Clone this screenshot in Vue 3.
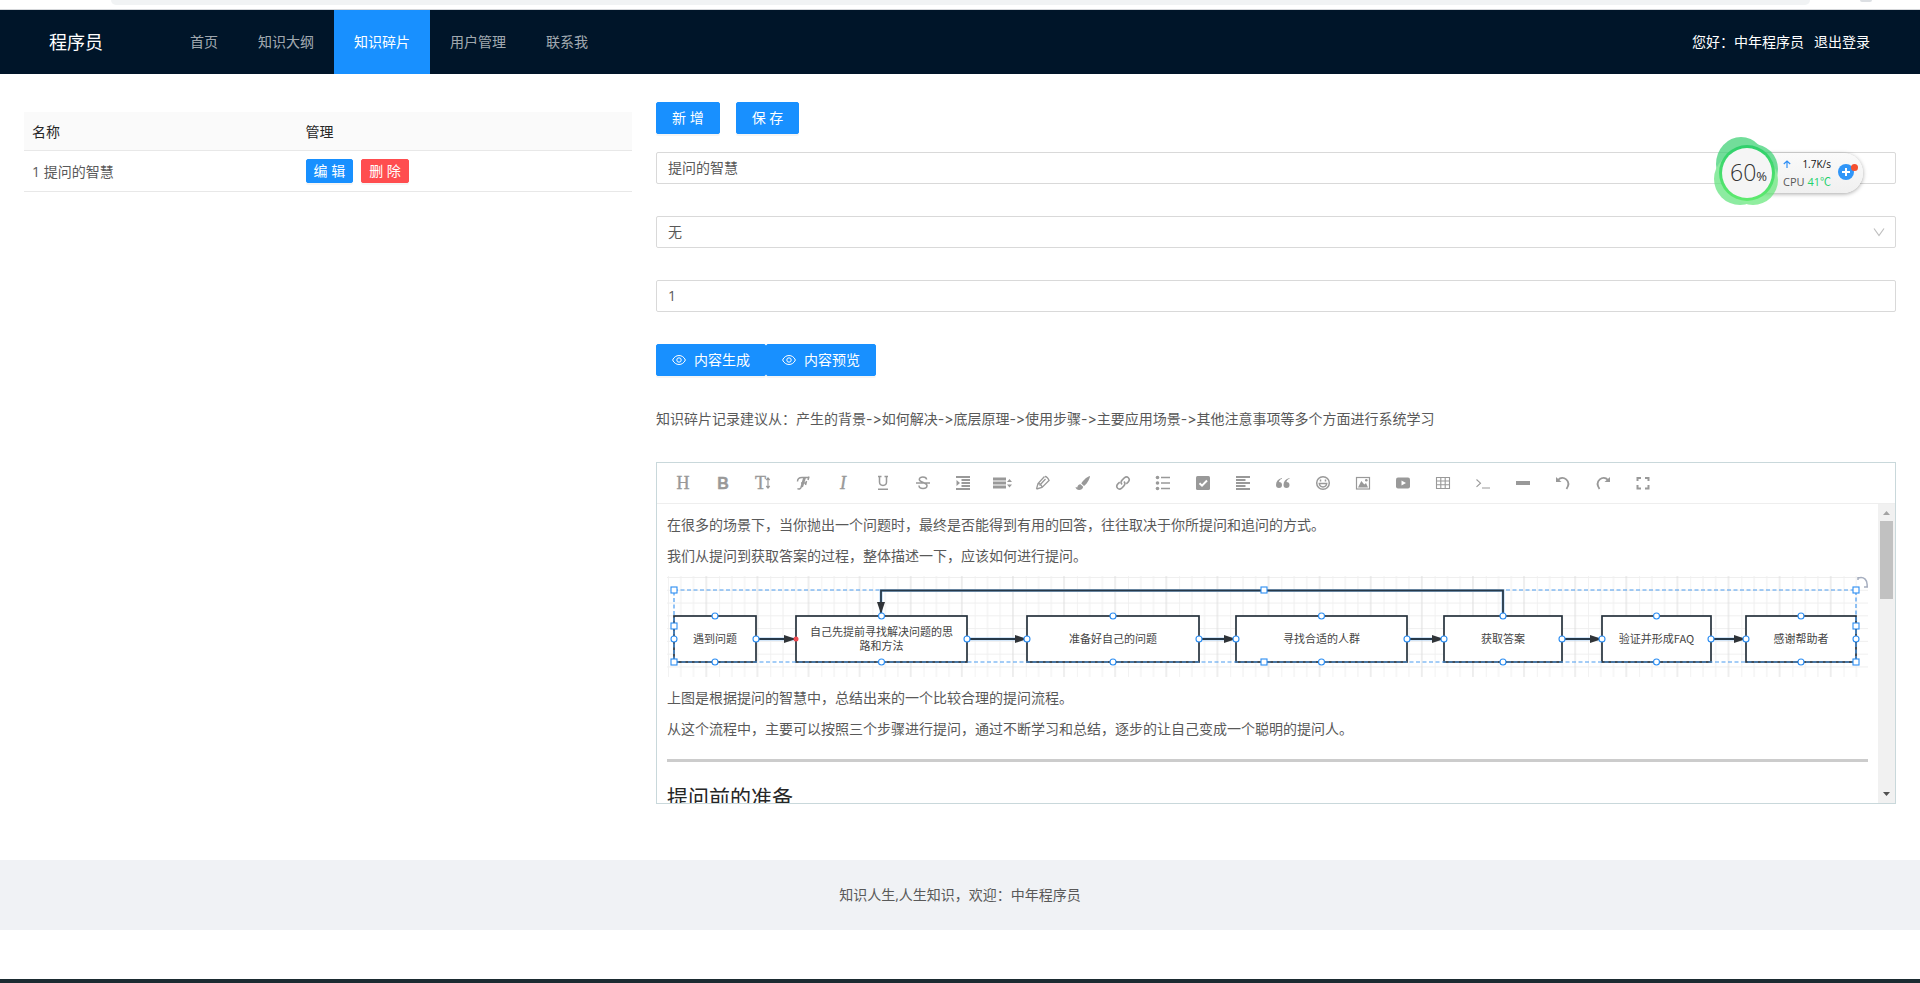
<script setup>
import { ref } from 'vue'

const menus = ['首页', '知识大纲', '知识碎片', '用户管理', '联系我']
const active = '知识碎片'
const title = ref('提问的智慧')
const parent = ref('无')
const sort = ref('1')

const tools = [
  '标题', '加粗', '字号', '字体', '斜体', '下划线', '删除线', '缩进', '行高', '文字颜色',
  '背景色', '链接', '列表', '待办', '对齐', '引用', '表情', '图片', '视频', '表格',
  '代码', '分割线', '撤销', '恢复', '全屏',
]

const nodes = [
  { x: 7, w: 82, lines: ['遇到问题'] },
  { x: 129, w: 171, lines: ['自己先提前寻找解决问题的思', '路和方法'] },
  { x: 360, w: 172, lines: ['准备好自己的问题'] },
  { x: 569, w: 171, lines: ['寻找合适的人群'] },
  { x: 777, w: 118, lines: ['获取答案'] },
  { x: 935, w: 109, lines: ['验证并形成FAQ'] },
  { x: 1079, w: 110, lines: ['感谢帮助者'] },
]
const links = nodes.slice(1).map((n, i) => ({ from: nodes[i].x + nodes[i].w, to: n.x }))
const squares = [[7, 14], [7, 50], [7, 86], [597, 14], [597, 86], [1189, 14], [1189, 50], [1189, 86]]
</script>

<template>
  <div class="page">
    <div class="browser-edge">
      <span class="address"></span>
      <span class="avatar"></span>
    </div>

    <header class="header">
      <div class="logo">程序员</div>
      <nav class="nav">
        <a v-for="m in menus" :key="m" href="#" :class="['nav-item', { active: m === active }]">{{ m }}</a>
      </nav>
      <div class="user">
        <a href="#">您好：中年程序员</a>
        <a href="#">退出登录</a>
      </div>
    </header>

    <main class="main">
      <section class="left">
        <table class="table">
          <thead>
            <tr><th class="name">名称</th><th>管理</th></tr>
          </thead>
          <tbody>
            <tr>
              <td>1 提问的智慧</td>
              <td>
                <div class="row-actions">
                  <button class="btn small" type="button">编 辑</button>
                  <button class="btn small danger" type="button">删 除</button>
                </div>
              </td>
            </tr>
          </tbody>
        </table>
      </section>

      <section class="right">
        <div class="actions">
          <button class="btn" type="button">新 增</button>
          <button class="btn" type="button">保 存</button>
        </div>
        <div class="form">
          <input v-model="title" class="field" type="text" aria-label="名称" />
          <div class="select-wrap">
            <select v-model="parent" class="field" aria-label="上级">
              <option>无</option>
            </select>
            <svg class="chevron" viewBox="0 0 12 12" width="12" height="12"><path d="M1 2.500 6 9.500 11 2.500" fill="none" stroke="#bfbfbf" stroke-width="1.200" /></svg>
          </div>
          <input v-model="sort" class="field" type="text" aria-label="排序" />
          <div class="preview-actions">
            <button v-for="t in ['内容生成', '内容预览']" :key="t" class="btn icon-btn" type="button">
              <svg viewBox="0 0 14 14" width="14" height="14" fill="none" stroke="#fff" stroke-width="1">
                <path d="M.6 7C2 4 4.300 2.500 7 2.500S12 4 13.400 7C12 10 9.700 11.500 7 11.500S2 10 .6 7Z" />
                <circle cx="7" cy="7" r="2.200" />
              </svg>
              <span>{{ t }}</span>
            </button>
          </div>
          <p class="hint">知识碎片记录建议从：产生的背景-&gt;如何解决-&gt;底层原理-&gt;使用步骤-&gt;主要应用场景-&gt;其他注意事项等多个方面进行系统学习</p>
        </div>

        <div class="editor">
          <div class="toolbar">
            <button v-for="(t, i) in tools" :key="t" class="tool" type="button" :aria-label="t">
              <svg viewBox="0 0 20 24" width="20" height="24" fill="none" stroke="#999" stroke-width="1.500">
                <text v-if="i === 0" x="10" y="18" class="serif" text-anchor="middle">H</text>
                <text v-else-if="i === 1" x="10" y="18" class="sans" text-anchor="middle">B</text>
                <template v-else-if="i === 2">
                  <text x="2" y="18" class="serif">T</text>
                  <path d="M15 7v10M13.300 9 15 7l1.700 2M13.300 15l1.700 2 1.700-2" stroke-width="1.200" />
                </template>
                <text v-else-if="i === 4" x="10" y="18" class="serif italic" text-anchor="middle">I</text>
                <g v-else transform="translate(0 4)">
                  <template v-if="i === 3">
                    <path d="M4.500 6.500C4.500 3.500 6.500 2.500 9 2.500h6.500M16 1.500l-1 3.500M11 2.500 8 12.500C7.500 14 5.500 14.500 4.500 13.500M8 8h5M13.500 6l-1 4" />
                    <path d="M12 2.500 9 12" stroke-width="2" />
                  </template>
                  <path v-else-if="i === 5" d="M5 1.500h3.500M11.500 1.500H15M6.500 1.500V7c0 4.500 7 4.500 7 0V1.500M5 14.200h10" />
                  <path v-else-if="i === 6" d="M13.600 4.500C13.300 1 6.300 1 6.300 4.500c0 3 7.700 3 7.700 6 0 4-8 4-8 0M3 8h14" />
                  <g v-else-if="i === 7">
                    <path d="M3 2h14M8.500 5H17M8.500 8H17M8.500 11H17M3 14h14" stroke-width="1.800" />
                    <path d="M3.500 5 7 8l-3.500 3Z" fill="#999" stroke="none" />
                  </g>
                  <path v-else-if="i === 8" fill="#999" stroke="none" d="M0 2.500h13v3H0zM0 6.500h13v3H0zM0 10.500h13v3H0zM14 7l2.500-3L19 7zM14 9.500l2.500 3 2.500-3z" />
                  <path v-else-if="i === 9" d="M3.500 14 5 8.500 11.500 1.500M3.500 14 9 12.500 16.500 5M6.500 10.500l6-6.500M12 1.500c1.500 0 3.500 2 4 4M5 8.500c2 0 4 2 4 4" stroke-width="1.300" />
                  <path v-else-if="i === 10" fill="#999" stroke="none" d="M16.500 1C13 2.500 9.500 6 8.300 8.500L11 11c2.500-1.500 5.500-6.500 6-9.500ZM7.500 9.300c-2 0-3 1.500-3.200 3.200L2.500 12c.5 4 7 4 7.700-.3Z" />
                  <path v-else-if="i === 11" d="M9 9.500c-1.800-1.800-1-3.300.3-4.600l2-2c3-2.600 6.600 1 4 4l-2 2M11 6.500c1.800 1.800 1 3.300-.3 4.600l-2 2c-3 2.600-6.600-1-4-4l2-2" />
                  <g v-else-if="i === 12">
                    <path d="M8 2.500h9M8 8h9M8 13.500h9" />
                    <g fill="#999" stroke="none"><circle cx="4.500" cy="2.500" r="1.800" /><circle cx="4.500" cy="8" r="1.800" /><circle cx="4.500" cy="13.500" r="1.800" /></g>
                  </g>
                  <g v-else-if="i === 13"><rect x="3" y="1" width="14" height="14" rx="1.500" fill="#999" stroke="none" /><path d="m6.500 8.300 2.500 2.400 5-5.200" stroke="#fff" stroke-width="2" /></g>
                  <path v-else-if="i === 14" d="M3 2h14M3 5h9.500M3 8h14M3 11h9.500M3 14h14" stroke-width="1.800" />
                  <path v-else-if="i === 15" fill="#999" stroke="none" d="M9 3C5 4 3 6.500 3 10a3 3 0 1 0 3-3c.2-1.500 1.200-2.700 3-3.300ZM16.500 3c-4 1-6 3.500-6 7a3 3 0 1 0 3-3c.2-1.500 1.200-2.700 3-3.300Z" />
                  <g v-else-if="i === 16"><circle cx="10" cy="8" r="6.300" /><path d="M6.300 8.500h7.400c-.5 4.600-6.900 4.600-7.400 0ZM7.500 4.500v2M12.500 4.500v2" /></g>
                  <g v-else-if="i === 17"><rect x="3.500" y="2.500" width="13" height="11.500" stroke-width="1.200" /><path d="M5 12.500 8.300 6l3 3.500L13 8l2 4.500Z" fill="#999" stroke="none" /><circle cx="13.300" cy="5.300" r="1.300" fill="#999" stroke="none" /></g>
                  <g v-else-if="i === 18"><rect x="3" y="2.500" width="14" height="11" rx="2" fill="#999" stroke="none" /><path d="m8.500 5.500 4.500 2.500-4.500 2.500Z" fill="#fff" stroke="none" /></g>
                  <path v-else-if="i === 19" d="M3.500 2.500h13v11h-13ZM3.500 6h13M3.500 9.800h13M7.800 2.500v11M12.200 2.500v11" stroke-width="1.100" />
                  <path v-else-if="i === 20" d="m3.500 4.500 4 3.700-4 3.700M9 13h8" stroke-width="1.100" />
                  <path v-else-if="i === 21" d="M3 8h14" stroke-width="4" />
                  <g v-else-if="i === 22"><path d="M5 5C10-.5 19 6 13.500 14" stroke-width="1.800" /><path d="M3 2v5h5.500Z" fill="#999" stroke="none" /></g>
                  <g v-else-if="i === 23"><path d="M15 5C10-.5 1 6 6.500 14" stroke-width="1.800" /><path d="M17 2v5h-5.500Z" fill="#999" stroke="none" /></g>
                  <path v-else d="M4.500 6V3h3.500M12 3h3.500v3M15.500 10v3.500H12M8 13.500H4.500V10" stroke-width="2" />
                </g>
              </svg>
            </button>
          </div>

          <div class="body">
            <article class="content">
              <p>在很多的场景下，当你抛出一个问题时，最终是否能得到有用的回答，往往取决于你所提问和追问的方式。</p>
              <p>我们从提问到获取答案的过程，整体描述一下，应该如何进行提问。</p>
              <svg class="flow" viewBox="0 0 1201 101">
                <defs>
                  <pattern id="grid" x="1" y="1" width="51.110" height="51.110" patternUnits="userSpaceOnUse">
                    <path d="M12.800 0v51.110M25.500 0v51.110M0 .5h51.110M0 13.300h51.110M0 26h51.110M0 38.800h51.110M.3 0v51.110" stroke="#efefef" stroke-width="1" />
                    <path d="M38.300 0v51.110" stroke="#dedede" stroke-width="1" />
                  </pattern>
                  <marker id="arrow" markerWidth="12" markerHeight="8" refX="12" refY="4" orient="auto" markerUnits="userSpaceOnUse">
                    <path d="M0 0 12 4 0 8Z" fill="#303438" />
                  </marker>
                </defs>
                <rect width="1201" height="101" fill="url(#grid)" />
                <rect x="1190" width="11" height="13" fill="#fff" />
                <path d="M1191 2c6-2 10 2 9 9M1191 4V1M1197 11h4" fill="none" stroke="#a6aebf" stroke-width="1.500" />
                <rect v-for="n in nodes" :key="n.x" :x="n.x" y="40" :width="n.w" height="46" fill="#fff" stroke="#26323c" stroke-width="1.700" />
                <rect x="7" y="14" width="1182" height="72" fill="none" stroke="#4a9cf0" stroke-width="1.200" stroke-dasharray="4 2.500" />
                <g v-for="l in links" :key="l.to">
                  <path :d="`M${l.from} 63H${l.to}`" stroke="#a9d0f5" stroke-width="3" />
                  <path :d="`M${l.from} 63H${l.to}`" stroke="#26394a" stroke-width="1.800" marker-end="url(#arrow)" />
                </g>
                <g fill="none">
                  <path d="M836 40V14.500H214V38" stroke="#a9d0f5" stroke-width="3" />
                  <path d="M836 40V14.500H214V38" stroke="#26394a" stroke-width="1.800" marker-end="url(#arrow)" />
                </g>
                <g fill="#fff" stroke="#2b8df2" stroke-width="1.100">
                  <template v-for="n in nodes" :key="n.x">
                    <circle :cx="n.x + n.w / 2" cy="40" r="3" />
                    <circle :cx="n.x + n.w / 2" cy="86" r="3" />
                    <circle v-if="n.x !== 129" :cx="n.x" cy="63" r="3" />
                    <circle :cx="n.x + n.w" cy="63" r="3" />
                  </template>
                  <rect v-for="s in squares" :key="s.join()" :x="s[0] - 3" :y="s[1] - 3" width="6" height="6" />
                </g>
                <circle cx="129" cy="63" r="2.500" fill="#f04a50" />
                <template v-for="n in nodes" :key="n.x">
                  <text
                    v-for="(line, k) in n.lines" :key="line" class="node-text" text-anchor="middle"
                    :x="n.x + n.w / 2" :y="67 + (k * 2 - n.lines.length + 1) * 7"
                  >{{ line }}</text>
                </template>
              </svg>
              <p>上图是根据提问的智慧中，总结出来的一个比较合理的提问流程。</p>
              <p>从这个流程中，主要可以按照三个步骤进行提问，通过不断学习和总结，逐步的让自己变成一个聪明的提问人。</p>
              <hr />
              <h2>提问前的准备</h2>
            </article>
            <div class="scrollbar">
              <svg viewBox="0 0 17 17" width="17" height="17"><path d="M5 11h7L8.500 7Z" fill="#a3a3a3" /></svg>
              <div class="thumb"></div>
              <svg class="down" viewBox="0 0 17 17" width="17" height="17"><path d="M5 6h7l-3.500 4Z" fill="#505050" /></svg>
            </div>
          </div>
        </div>
      </section>
    </main>

    <footer class="footer">知识人生,人生知识，欢迎：中年程序员</footer>
    <div class="taskbar"></div>

    <aside class="monitor">
      <div class="stats">
        <svg viewBox="0 0 8 8" width="8" height="8" fill="none" stroke="#2f8ff5" stroke-width="1.200"><path d="M4 8V1M.8 4 4 1l3.200 3" /></svg>
        <span class="speed">1.7K/s</span>
        <span class="cpu">CPU <b>41℃</b></span>
      </div>
      <svg class="plus" viewBox="0 0 22 20" width="22" height="20">
        <circle cx="9" cy="11" r="8" fill="#3096f8" />
        <path d="M9 7v8M5 11h8" stroke="#fff" stroke-width="2" />
        <circle cx="17.500" cy="6.500" r="3.500" fill="#f4502f" />
      </svg>
      <svg class="ring" viewBox="0 0 68 70" width="68" height="70">
        <defs>
          <linearGradient id="ring-fill" x1="0" y1="0" x2="0" y2="1"><stop offset="0" stop-color="#2fd06c" /><stop offset="1" stop-color="#5eea6e" /></linearGradient>
        </defs>
        <g opacity=".7">
          <ellipse cx="28" cy="28" rx="25" ry="27" fill="#37d070" />
          <circle cx="40" cy="33" r="25" fill="#37d070" />
          <circle cx="27" cy="43" r="26" fill="#5ee37a" />
          <circle cx="40" cy="44" r="25" fill="#62e777" />
        </g>
        <circle cx="34" cy="37" r="28" fill="url(#ring-fill)" />
        <circle cx="34" cy="37" r="25" fill="#f5f5f5" />
        <text x="17" y="45" class="percent">60<tspan class="sign">%</tspan></text>
      </svg>
    </aside>
  </div>
</template>

<style>
body {
  background: #fff;
}
</style>

<style scoped>
* {
  box-sizing: border-box;
}
.page {
  position: relative;
  display: flex;
  flex-direction: column;
  min-height: 100vh;
  font: 14px/21px "Open Sans", "Noto Sans CJK SC", sans-serif;
  color: #595959;
}
a {
  text-decoration: none;
}
p {
  margin: 0;
}
.browser-edge {
  display: flex;
  justify-content: space-between;
  height: 10px;
  padding: 0 48px 0 111px;
  border-bottom: 1px solid #d5d7da;
  overflow: hidden;
}
.address {
  flex: 1;
  height: 5px;
  margin-right: 50px;
  background: #f1f3f4;
  border-radius: 0 0 12px 12px;
}
.avatar {
  width: 12px;
  height: 2px;
  background: #dcdfe3;
  border-radius: 0 0 6px 6px;
}
.header {
  display: flex;
  align-items: center;
  height: 64px;
  padding: 0 50px 0 49px;
  background: #001529;
  color: #fff;
  line-height: 64px;
}
.logo {
  width: 121px;
  font-size: 18px;
}
.nav {
  display: flex;
  flex: 1;
}
.nav-item {
  padding: 0 20px;
  color: rgba(255, 255, 255, 0.65);
}
.nav-item.active {
  background: #1890ff;
  color: #fff;
}
.user {
  display: flex;
  gap: 10px;
}
.user a {
  color: #fff;
}
.main {
  display: grid;
  grid-template-columns: minmax(0, 1fr) minmax(0, 2fr);
  padding: 28px 0 56px;
}
.left {
  padding: 10px 8px 0 24px;
}
.right {
  padding: 0 24px 0 16px;
}
.table {
  width: 100%;
  border-collapse: separate;
  border-spacing: 0;
  table-layout: fixed;
}
.table th,
.table td {
  height: 39px;
  padding: 0 8px;
  border-bottom: 1px solid #e8e8e8;
  text-align: left;
  font-weight: 400;
}
.table td {
  height: 41px;
}
.table th {
  background: #fafafa;
  color: #262626;
}
.table .name {
  width: 45%;
}
.row-actions {
  display: flex;
  gap: 8px;
}
.btn {
  height: 32px;
  padding: 0 15px;
  border: 1px solid #1890ff;
  border-radius: 2px;
  background: #1890ff;
  color: #fff;
  font: inherit;
  line-height: 20px;
  box-shadow: 0 2px 0 rgba(0, 0, 0, 0.04);
}
.btn.small {
  height: 24px;
  padding: 0 7px;
}
.btn.danger {
  border-color: #ff4d4f;
  background: #ff4d4f;
}
.actions {
  display: flex;
  gap: 16px;
  margin-bottom: 18px;
}
.form {
  display: flex;
  flex-direction: column;
  gap: 32px;
}
.field {
  display: block;
  width: 100%;
  height: 32px;
  padding: 0 11px 2px;
  border: 1px solid #d9d9d9;
  border-radius: 2px;
  background: #fff;
  color: #595959;
  font: inherit;
  appearance: none;
}
.select-wrap {
  position: relative;
}
.chevron {
  position: absolute;
  top: 10px;
  right: 11px;
  pointer-events: none;
}
.preview-actions {
  display: flex;
}
.icon-btn {
  display: flex;
  align-items: center;
  gap: 8px;
}
.hint {
  line-height: 22px;
  font-family: Inter, "Noto Sans CJK SC", sans-serif;
  font-feature-settings: "calt" 0;
}
.editor {
  margin-top: 32px;
  border: 1px solid #c9d8db;
}
.toolbar {
  display: flex;
  padding: 0 6px;
  border-bottom: 1px solid #eee;
}
.tool {
  display: flex;
  align-items: center;
  justify-content: center;
  width: 40px;
  height: 40px;
  padding: 0;
  border: 0;
  background: none;
}
.tool svg {
  overflow: visible;
}
.tool text {
  fill: #999;
  stroke: #999;
  stroke-width: 0.4px;
}
.serif {
  font: 18px "Liberation Serif", serif;
}
.italic {
  font-style: italic;
}
.sans {
  font: bold 16px "Liberation Sans", sans-serif;
}
.body {
  display: flex;
  height: 299px;
}
.content {
  flex: 1;
  min-width: 0;
  padding: 0 10px;
  overflow: hidden;
}
.content p {
  margin: 10px 0;
}
.flow {
  display: block;
  width: 100%;
}
.node-text {
  font: 11px "Noto Sans CJK SC", sans-serif;
  fill: #444;
}
.content hr {
  height: 3px;
  margin: 20px 0;
  border: 0;
  background: #ccc;
}
.content h2 {
  margin: 0;
  font-size: 21px;
  font-weight: 400;
  line-height: 30px;
  color: #262626;
}
.scrollbar {
  display: flex;
  flex-direction: column;
  align-items: center;
  width: 17px;
  background: #f1f1f1;
}
.thumb {
  width: 13px;
  height: 78px;
  background: #c1c1c1;
}
.down {
  margin-top: auto;
}
.footer {
  padding: 24px 50px;
  background: #f0f2f5;
  line-height: 22px;
  text-align: center;
}
.taskbar {
  height: 4px;
  margin-top: auto;
  background: #1b2b31;
}
.monitor {
  position: absolute;
  top: 153px;
  right: 57px;
  display: flex;
  align-items: center;
  width: 116px;
  height: 40px;
  padding: 0 3px 0 36px;
  border-radius: 20px;
  background: linear-gradient(#fafafa, #f0f0f0);
  box-shadow: 0 1px 4px rgba(0, 0, 0, 0.35);
}
.stats {
  display: grid;
  grid-template-columns: 8px 1fr;
  align-items: center;
  width: 48px;
  font-size: 10px;
  line-height: 18px;
}
.speed {
  text-align: right;
  color: #111;
}
.cpu {
  grid-column: 1 / 3;
  font-size: 11px;
  white-space: nowrap;
}
.cpu b {
  font-weight: 400;
  color: #1fd06c;
}
.plus {
  flex: none;
  margin: 0 0 4px 6px;
}
.ring {
  position: absolute;
  top: -17px;
  left: -34px;
}
.percent {
  font: 300 23px "Open Sans", sans-serif;
  fill: #333;
}
.sign {
  font-size: 13px;
  font-weight: 400;
}
</style>
